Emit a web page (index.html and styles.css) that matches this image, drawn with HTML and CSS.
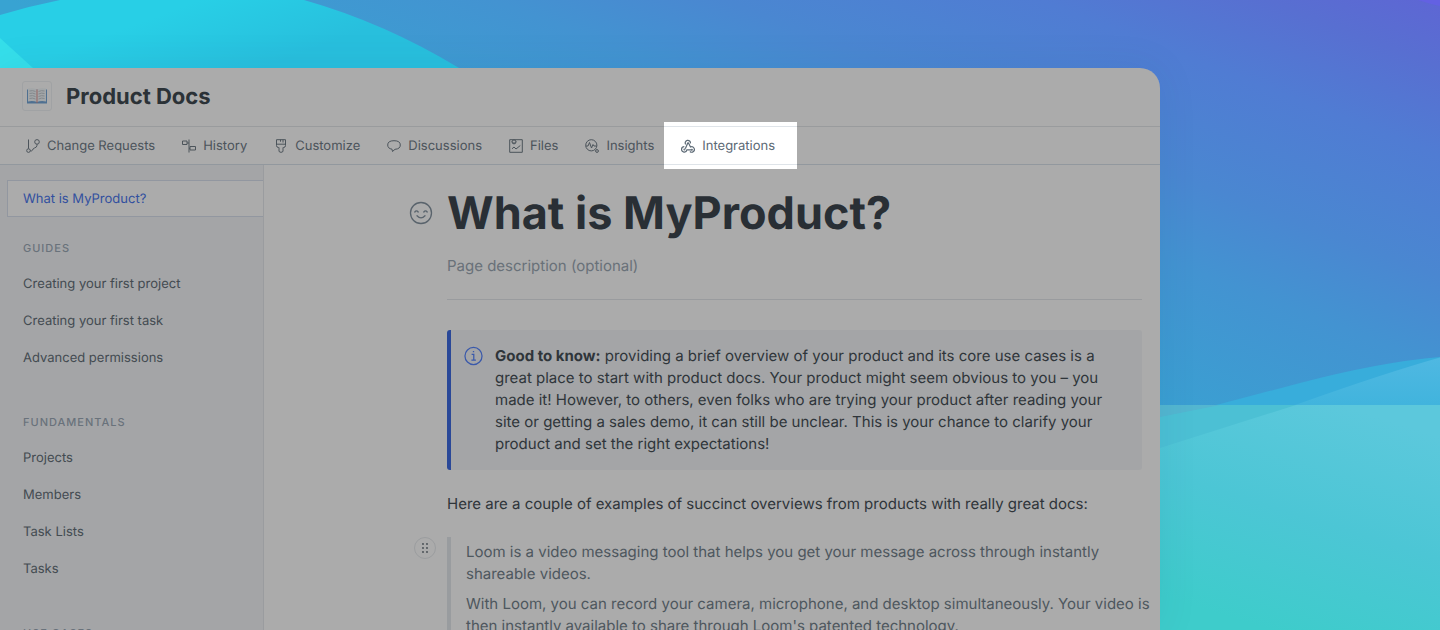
FILE: index.html
```html
<!DOCTYPE html>
<html lang="en">
<head>
<meta charset="utf-8">
<title>Product Docs</title>
<link rel="stylesheet" href="styles.css">
</head>
<body>
<div class="stage">
  <svg class="backdrop" viewBox="0 0 1440 630" preserveAspectRatio="none" aria-hidden="true">
    <defs>
      <linearGradient id="sky" gradientUnits="userSpaceOnUse" x1="1440" y1="0" x2="1254" y2="482">
        <stop offset="0" stop-color="#5e66d4"/>
        <stop offset=".12" stop-color="#586fd1"/>
        <stop offset=".28" stop-color="#507cd3"/>
        <stop offset=".5" stop-color="#4a87d1"/>
        <stop offset=".66" stop-color="#4393d1"/>
        <stop offset="1" stop-color="#38a3d2"/>
      </linearGradient>
      <linearGradient id="hill" gradientUnits="userSpaceOnUse" x1="200" y1="0" x2="230" y2="80">
        <stop offset="0" stop-color="#28cfe6"/>
        <stop offset="1" stop-color="#28bfdd"/>
      </linearGradient>
      <linearGradient id="sea" gradientUnits="userSpaceOnUse" x1="1340" y1="405" x2="1270" y2="630">
        <stop offset="0" stop-color="#5cc8dc"/>
        <stop offset=".5" stop-color="#4cc6d5"/>
        <stop offset="1" stop-color="#3ecccb"/>
      </linearGradient>
      <linearGradient id="wave" gradientUnits="userSpaceOnUse" x1="0" y1="358" x2="0" y2="405">
        <stop offset="0" stop-color="#4fb8e2"/>
        <stop offset="1" stop-color="#41b4dd"/>
      </linearGradient>
    </defs>
    <rect width="1440" height="630" fill="url(#sky)"/>
    <path d="M1418 0Q1430 4 1440 6V0Z" fill="#6361e2"/>
    <path d="M0 15Q30 6 60 0H304Q385 23 459 68L560 140H0Z" fill="url(#hill)"/>
    <path d="M0 38L33 68L60 100H0Z" fill="#35dfea"/>
    <path d="M1160 417Q1190 411 1220 404L1300 383Q1380 362 1440 357V405H1160Z" fill="#38addb"/>
    <path d="M1160 448L1298 404Q1385 373 1440 357.500V630H1160Z" fill="url(#wave)"/>
    <rect x="1160" y="405" width="280" height="225" fill="#53b6d0"/>
    <path d="M1160 417Q1190 411 1220 405H1440V500H1160Z" fill="#4cc0d4"/>
    <path d="M1160 448L1296 405H1440V630H1160Z" fill="url(#sea)"/>
  </svg>

  <div class="window">
    <header class="titlebar">
      <span class="space-icon">
        <svg width="22" height="18" viewBox="0 0 22 18" aria-hidden="true">
          <path d="M1 2.500H21V16.500H1Z" fill="#4f7091"/>
          <path d="M2 1.500Q7 .5 11 2.500Q15 .5 20 1.500V14.500Q15 13.500 11 15Q7 13.500 2 14.500Z" fill="#a2a6a8"/>
          <path d="M3.500 4Q6.500 3 9.500 4.500M3.500 6.500Q6.500 5.500 9.500 7M3.500 9Q6.500 8 9.500 9.500M3.500 11.500Q6.500 10.500 9.500 12M12.500 4.500Q15.500 3 18.500 4M12.500 7Q15.500 5.500 18.500 6.500M12.500 9.500Q15.500 8 18.500 9M12.500 12Q15.500 10.500 18.500 11.500" fill="none" stroke="#84898d"/>
          <path d="M11 2.500V16" stroke="#93605f" stroke-width="1"/>
        </svg>
      </span>
      <span class="space-name">Product Docs</span>
    </header>

    <nav class="tabs" aria-label="Space">
      <a class="tab" href="#changes">
        <svg class="icon" viewBox="0 0 14 14"><path d="M2.500.5V9.700M11 5.200V6.300Q11 8.300 8.500 9Q6.800 9.600 6.500 11.200Q6 12.300 4.300 11.700"/><circle cx="2.500" cy="11.600" r="1.800"/><circle cx="11" cy="2.900" r="2.300"/></svg>
        Change Requests</a>
      <a class="tab" href="#history">
        <svg class="icon" viewBox="0 0 14 14"><path d="M.5 2H5V5.500H.5ZM8 7.500H13.500V11H8ZM7 .5V13.500M5 4H7M7 9.300H8"/></svg>
        History</a>
      <a class="tab" href="#customize">
        <svg class="icon" viewBox="0 0 14 14"><path d="M2.500.7H11.500V6.500Q11.500 8.500 9.500 8.500H9V12Q9 13.300 7 13.300Q5 13.300 5 12V8.500H4.500Q2.500 8.500 2.500 6.500ZM2.500 5.200H11.500M6.500.7V2.700M9 .7V3.500"/></svg>
        Customize</a>
      <a class="tab" href="#discussions">
        <svg class="icon" viewBox="0 0 14 14"><path d="M5 10.200Q.7 9.500.7 6Q.7 1.700 7 1.700Q13.300 1.700 13.300 6Q13.300 10 8 10.300L5.500 12.500Z"/></svg>
        Discussions</a>
      <a class="tab" href="#files">
        <svg class="icon" viewBox="0 0 14 14"><path d="M.7.7H13.300V13.300H.7ZM3 9.800L5 8L7 10L11.300 6.500M3 2.500L5 4.500L7 2.500"/><circle cx="5" cy="2.900" r="2"/></svg>
        Files</a>
      <a class="tab" href="#insights">
        <svg class="icon" viewBox="0 0 14 14"><circle cx="6.300" cy="6.300" r="5.600"/><path d="M.8 7H3L4.500 3.500L6.500 9L8 5.500L9 7H11.800"/><circle cx="12" cy="12" r="1.400"/></svg>
        Insights</a>
      <a class="tab tab-spotlight" href="#integrations">
        <svg class="icon icon-strong" viewBox="0 0 14 14"><path d="M4.700 5.400A2.600 2.600 0 1 1 9.400 4.300M7 3.500L4.300 9.800M3.300 7.700A2.700 2.700 0 1 0 5.900 10.900H10.500M7.200 3.500L9.500 8A2.700 2.700 0 1 1 8.900 12.500"/><circle cx="3.400" cy="10.500" r=".4"/><circle cx="10.900" cy="10.700" r=".4"/></svg>
        Integrations</a>
    </nav>

    <div class="workspace">
      <nav class="sidebar" aria-label="Pages">
        <a class="page-link page-current" href="#intro">What is MyProduct?</a>
        <h2 class="group-title group-first">Guides</h2>
        <a class="page-link" href="#first-project">Creating your first project</a>
        <a class="page-link" href="#first-task">Creating your first task</a>
        <a class="page-link" href="#permissions">Advanced permissions</a>
        <h2 class="group-title">Fundamentals</h2>
        <a class="page-link" href="#projects">Projects</a>
        <a class="page-link" href="#members">Members</a>
        <a class="page-link" href="#lists">Task Lists</a>
        <a class="page-link" href="#tasks">Tasks</a>
        <h2 class="group-title">Use cases</h2>
      </nav>

      <main class="page">
        <button class="emoji-button" type="button" aria-label="Choose page emoji">
          <svg width="24" height="24" viewBox="0 0 24 24" fill="none" stroke="currentColor" stroke-width="1.300" stroke-linecap="round"><circle cx="12" cy="12" r="10.500"/><path d="M5.800 11Q7.500 8.800 9.200 11M14.800 11Q16.500 8.800 18.200 11M8 14.800Q12 19 16 14.800"/></svg>
        </button>
        <h1 class="page-title">What is MyProduct?</h1>
        <p class="page-description">Page description (optional)</p>
        <hr class="divider">
        <aside class="callout">
          <svg class="callout-icon" viewBox="0 0 20 20" fill="none" stroke="currentColor" stroke-width="1.300"><circle cx="10" cy="10" r="9"/><path d="M8 8.300H10.300V14.300M7.800 14.300H12.500M9.300 5.500H10.700" /></svg>
          <p class="text"><strong>Good to know:</strong> providing a brief overview of your product and its core use cases is a great place to start with product docs. Your product might seem obvious to you – you made it! However, to others, even folks who are trying your product after reading your site or getting a sales demo, it can still be unclear. This is your chance to clarify your product and set the right expectations!</p>
        </aside>
        <p class="text lead">Here are a couple of examples of succinct overviews from products with really great docs:</p>
        <button class="drag-handle" type="button" aria-label="Move block">
          <svg width="8" height="12" viewBox="0 0 8 12" fill="currentColor"><circle cx="2" cy="2" r=".9"/><circle cx="6" cy="2" r=".9"/><circle cx="2" cy="6" r=".9"/><circle cx="6" cy="6" r=".9"/><circle cx="2" cy="10" r=".9"/><circle cx="6" cy="10" r=".9"/></svg>
        </button>
        <blockquote class="quote">
          <p class="text">Loom is a video messaging tool that helps you get your message across through instantly shareable videos.</p>
          <p class="text">With Loom, you can record your camera, microphone, and desktop simultaneously. Your video is then instantly available to share through Loom's patented technology.</p>
        </blockquote>
      </main>
    </div>
  </div>
</div>
</body>
</html>
```
FILE: styles.css
```css
* { box-sizing: border-box; }

body {
  margin: 0;
  font-family: Inter, "Liberation Sans", sans-serif;
  font-size: 15px;
  line-height: 22px;
  color: #2f353a;
  text-rendering: geometricPrecision;
}

h1, h2, p, blockquote { margin: 0; }

a { color: inherit; text-decoration: none; }

button {
  display: flex;
  align-items: center;
  justify-content: center;
  padding: 0;
  border: 0;
  background: none;
  color: inherit;
}

.stage {
  position: relative;
  display: flex;
  height: 100vh;
  overflow: hidden;
  padding: 68px 280px 0 0;
}

.backdrop {
  position: absolute;
  inset: 0;
  width: 100%;
  height: 100%;
}

.window {
  position: relative;
  flex: 1;
  display: flex;
  flex-direction: column;
  min-width: 0;
  background: #ababab;
  border-top-right-radius: 20px;
  box-shadow: 0 0 40px rgba(20, 60, 110, 0.08);
}

.titlebar {
  display: flex;
  align-items: center;
  gap: 14px;
  height: 59px;
  padding: 0 22px 2px;
  border-bottom: 1px solid #999b9d;
}

.space-icon {
  display: flex;
  align-items: center;
  justify-content: center;
  width: 30px;
  height: 30px;
  border: 1px solid #a0a2a4;
  border-radius: 3px;
}

.space-name {
  padding-top: 2px;
  font-size: 22px;
  font-weight: 700;
  line-height: 30px;
  color: #2b3237;
}

.tabs {
  display: flex;
  height: 38px;
  padding: 0 12px;
  border-bottom: 1px solid #92989e;
  font-size: 13px;
  color: #4c545b;
}

.tab {
  position: relative;
  display: flex;
  align-items: center;
  gap: 7px;
  padding: 0 13px 0 14px;
  white-space: nowrap;
}

.icon {
  width: 14px;
  height: 14px;
  fill: none;
  stroke: currentColor;
  stroke-width: 1;
}

.icon-strong { stroke-width: 1.2; }

.tab-spotlight {
  color: #5c6975;
  z-index: 1;
}

.tab-spotlight::before,
.tab-spotlight::after {
  content: "";
  position: absolute;
  z-index: -1;
}

.tab-spotlight::before {
  inset: -5px -9px -5px -3px;
  background: #fff;
}

.tab-spotlight::after {
  inset: -1px -9px -1px -3px;
  border: solid #dfe4e9;
  border-width: 1px 0;
}

.workspace {
  flex: 1;
  display: flex;
  min-height: 0;
}

.sidebar {
  flex: 0 0 264px;
  padding: 15px 0 0 7px;
  background: #a4a5a7;
  border-right: 1px solid #9a9c9f;
  font-size: 13px;
  color: #434b51;
}

.page-link {
  display: flex;
  align-items: center;
  height: 37px;
  padding: 0 16px;
}

.page-current {
  padding-left: 15px;
  background: #ababab;
  border: 1px solid #9297a0;
  border-right: 0;
  color: #32509f;
}

.group-title {
  margin: 36px 16px 7px;
  font-size: 11px;
  font-weight: 500;
  line-height: 20px;
  letter-spacing: 1px;
  text-transform: uppercase;
  color: #69727b;
}

.group-first { margin-top: 21px; }

.page {
  flex: 1;
  display: grid;
  grid-template-columns: 38px minmax(0, 1fr);
  align-content: start;
  min-width: 0;
  padding: 21px 18px 0 145px;
}

.page > * { grid-column: 2; }

.page > button { grid-column: 1; }

.emoji-button {
  width: 24px;
  height: 54px;
  color: #59636c;
}

.page-title {
  font-size: 45px;
  font-weight: 700;
  line-height: 54px;
  color: #292f35;
}

.page-description {
  margin-top: 15px;
  color: #697179;
}

.divider {
  width: 100%;
  margin: 22px 0 30px;
  border: 0;
  border-top: 1px solid #999b9e;
}

.callout {
  display: flex;
  gap: 12px;
  padding: 15px 24px 15px 13px;
  border-left: 4px solid #2a4898;
  border-radius: 3px;
  background: #a4a5a7;
}

.callout-icon {
  flex: none;
  width: 19px;
  height: 22px;
  color: #3a59ab;
}

.lead { margin: 23px 0 22px; }

.drag-handle {
  width: 22px;
  height: 22px;
  margin-left: 5px;
  border: 1px solid #9b9d9f;
  border-radius: 50%;
  color: #42494f;
}

.quote {
  display: grid;
  gap: 8px;
  margin-right: -12px;
  padding: 4px 0 4px 15px;
  border-left: 4px solid #999c9f;
  color: #4e575e;
}
```
